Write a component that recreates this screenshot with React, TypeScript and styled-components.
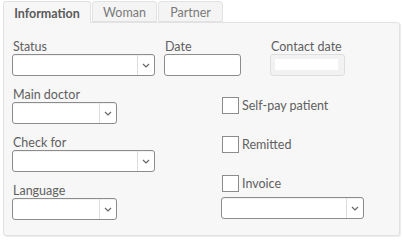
import styled, { createGlobalStyle } from "styled-components";

const GlobalStyle = createGlobalStyle`
	html, body {
		margin: 0;
		padding: 0;
		background: #ffffff;
	}
	body {
		font-family: Lato, "Noto Sans", "Liberation Sans", sans-serif;
		font-size: 12px;
		color: #555555;
	}
`;

const Wrapper = styled.div`
	width: 403px;
	height: 240px;
	padding: 1px 0 0 3px;
	box-sizing: border-box;
`;

const TabBar = styled.div`
	display: flex;
	height: 21px;
	position: relative;
	z-index: 1;
`;

const Tab = styled.div<{ active?: boolean; w: number }>`
	box-sizing: border-box;
	width: ${(props) => props.w}px;
	height: ${(props) => (props.active ? 22 : 21)}px;
	margin-right: 1px;
	display: flex;
	align-items: center;
	justify-content: center;
	font-size: 12.5px;
	font-weight: ${(props) => (props.active ? 700 : 400)};
	color: ${(props) => (props.active ? "#5a5a5a" : "#7a7a7a")};
	background: ${(props) => (props.active ? "#f7f7f7" : "#f4f4f4")};
	border: 1px solid #e2e2e2;
	border-bottom: ${(props) => (props.active ? "none" : "1px solid #e2e2e2")};
	border-radius: 3px 3px 0 0;
	padding-top: 1px;
`;

const Panel = styled.div`
	box-sizing: border-box;
	width: 397px;
	height: 214px;
	background: #f7f7f7;
	border: 1px solid #e2e2e2;
	border-radius: 0 3px 3px 3px;
	box-shadow: 1px 1px 1px rgba(0, 0, 0, 0.08);
	padding: 17px 8px 0 8px;
`;

const TopRow = styled.div`
	display: flex;
	margin-bottom: 12px;
`;

const Field = styled.div<{ gap?: number }>`
	display: flex;
	flex-direction: column;
	margin-right: ${(props) => props.gap ?? 0}px;
`;

const Label = styled.label`
	display: block;
	height: 14px;
	line-height: 14px;
	font-size: 12.5px;
	color: #606060;
	margin-left: 1px;
`;

const Columns = styled.div`
	display: grid;
	grid-template-columns: 209px 1fr;
`;

const Stack = styled.div<{ gap: number; top?: number }>`
	display: flex;
	flex-direction: column;
	gap: ${(props) => props.gap}px;
	padding-top: ${(props) => props.top ?? 0}px;
`;

const SelectBox = styled.div<{ w: number }>`
	box-sizing: border-box;
	width: ${(props) => props.w}px;
	height: 22px;
	display: flex;
	background: #ffffff;
	border: 1px solid #8c8c8c;
	border-radius: 3px;
	box-shadow: inset 0 1px 1px rgba(0, 0, 0, 0.06);
`;

const SelectValue = styled.div`
	flex: 1;
`;

const SelectArrow = styled.div`
	width: 16px;
	border-left: 1px solid #dcdcdc;
	display: flex;
	align-items: center;
	justify-content: center;
	svg {
		display: block;
	}
`;

const TextInput = styled.div<{ w: number }>`
	box-sizing: border-box;
	width: ${(props) => props.w}px;
	height: 22px;
	background: #ffffff;
	border: 1px solid #8c8c8c;
	border-radius: 3px;
`;

const DisabledInput = styled.div`
	box-sizing: border-box;
	width: 75px;
	height: 22px;
	background: #f2f2f2;
	border: 1px solid #dedede;
	border-radius: 3px;
	padding: 4px 6px 5px 4px;
	div {
		height: 100%;
		background: #ffffff;
	}
`;

const CheckRow = styled.div`
	display: flex;
	align-items: center;
	height: 16px;
	margin-left: 1px;
`;

const CheckSquare = styled.span`
	box-sizing: border-box;
	width: 17px;
	height: 17px;
	background: #ffffff;
	border: 1px solid #8c8c8c;
	margin-right: 3px;
`;

const CheckText = styled.span`
	font-size: 12.5px;
	color: #606060;
`;

const Chevron = () => (
	<svg width="8" height="5" viewBox="0 0 8 5">
		<path d="M1 1 L4 4 L7 1" fill="none" stroke="#666" strokeWidth="1.2" />
	</svg>
);

const Select = ({ w }: { w: number }) => (
	<SelectBox w={w}>
		<SelectValue />
		<SelectArrow>
			<Chevron />
		</SelectArrow>
	</SelectBox>
);

const Check = ({ text }: { text: string }) => (
	<CheckRow>
		<CheckSquare />
		<CheckText>{text}</CheckText>
	</CheckRow>
);

export default function App() {
	return (
		<Wrapper>
			<GlobalStyle />
			<TabBar>
				<Tab active w={88}>Information</Tab>
				<Tab w={65}>Woman</Tab>
				<Tab w={65}>Partner</Tab>
			</TabBar>
			<Panel>
				<TopRow>
					<Field gap={9}>
						<Label>Status</Label>
						<Select w={143} />
					</Field>
					<Field gap={29}>
						<Label>Date</Label>
						<TextInput w={77} />
					</Field>
					<Field>
						<Label>Contact date</Label>
						<DisabledInput>
							<div />
						</DisabledInput>
					</Field>
				</TopRow>
				<Columns>
					<Stack gap={12}>
						<Field>
							<Label>Main doctor</Label>
							<Select w={105} />
						</Field>
						<Field>
							<Label>Check for</Label>
							<Select w={143} />
						</Field>
						<Field>
							<Label>Language</Label>
							<Select w={105} />
						</Field>
					</Stack>
					<Stack gap={23} top={9}>
						<Check text="Self-pay patient" />
						<Check text="Remitted" />
						<Stack gap={6}>
							<Check text="Invoice" />
							<Select w={143} />
						</Stack>
					</Stack>
				</Columns>
			</Panel>
		</Wrapper>
	);
}
